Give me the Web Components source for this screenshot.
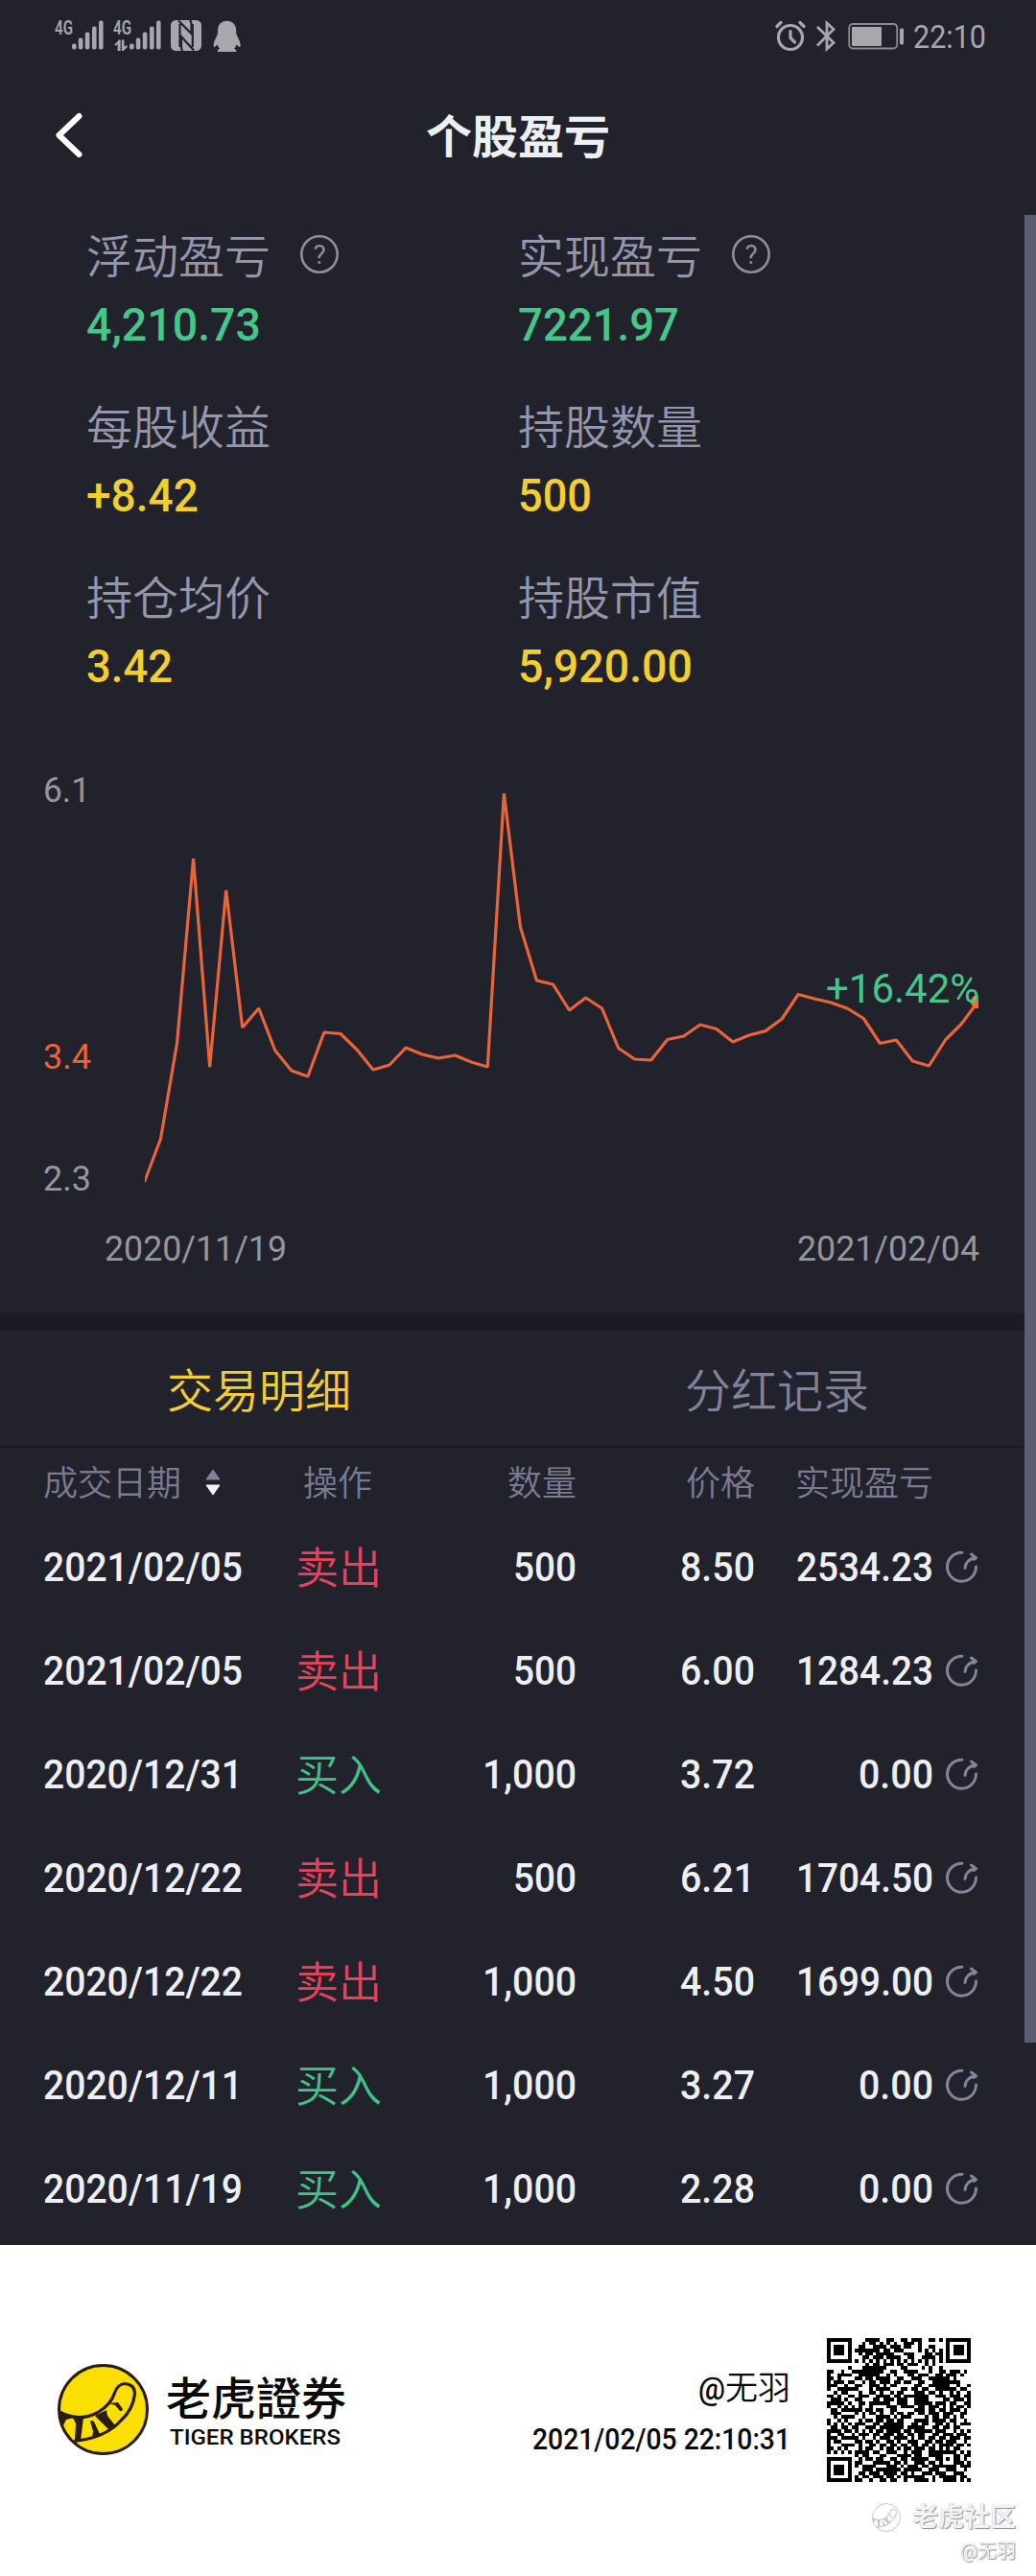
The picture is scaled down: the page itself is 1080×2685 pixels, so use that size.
<!DOCTYPE html>
<html lang="zh-CN">
<head>
<meta charset="utf-8">
<title>个股盈亏</title>
<style>
html,body{margin:0;padding:0;background:#fff}
body{width:1080px;font-family:Roboto,"Noto Sans CJK SC",sans-serif}
</style>
</head>
<body>
<pnl-page></pnl-page>
<script>
function define(name, html, init){
  customElements.define(name, class extends HTMLElement{
    constructor(){
      super();
      this.attachShadow({mode:'open'});
    }
    connectedCallback(){
      this.shadowRoot.innerHTML = typeof html === 'function' ? html(this) : html;
      if(init) init(this);
    }
  });
}

/* Text squeezed or stretched to a given advance width */
define('fit-text', e=>`<style>
:host{display:block;width:${e.getAttribute('w')}px;flex:none;white-space:nowrap}
span{display:inline-block;transform-origin:0 50%}
</style><span><slot></slot></span>`, e=>{
  const s=e.shadowRoot.querySelector('span');
  const n=s.getBoundingClientRect().width;
  if(n) s.style.transform=`scaleX(${(+e.getAttribute('w')/n).toFixed(4)})`;
});

const bars = [[0,24.5,6],[6.8,18.5,12],[13.8,12.5,18],[21,6.5,24],[28,0.5,30]]
  .map(([x,y,h])=>`<rect x="${x}" y="${y}" width="4.6" height="${h}" rx="2"/>`).join('');

define('status-bar', `<style>
:host{display:flex;height:75px;padding:0 52px 0 57px;box-sizing:border-box;justify-content:space-between;color:#a7a7ad}
svg{display:block;fill:#a7a7ad;flex:none}
.side{display:flex;align-items:flex-start;padding-top:21px;height:33px}
.net{font-size:20.500px;line-height:17px;font-weight:600;display:flex;flex-direction:column}
.time{font-size:34px;line-height:34px}
</style>
<div class="side">
  <div class="net"><fit-text w="19">4G</fit-text></div>
  <svg width="33" height="32" style="margin-left:-1px">${bars}</svg>
  <div class="net" style="margin-left:10px"><fit-text w="19">4G</fit-text>
    <svg width="17" height="15"><path d="M1 9 6 3.500h1.600V15H4.600V8.200L3 9.600zM8.800 3.500h2.600v7L14.600 9v2.200l-4 3.800H8.800z"/></svg></div>
  <svg width="33" height="32" style="margin-left:-2px">${bars}</svg>
  <svg width="32" height="32" style="margin-left:10px"><rect width="32" height="32" rx="5.500"/><path d="M8 .5 21.500 14V5Q21.500 1.500 20 0M24 31.500 11 17v10.500Q11 31 12.500 32M9.500 4v24M22.800 4v24" fill="none" stroke="#21222b" stroke-width="2.200"/></svg>
  <svg width="30" height="34" style="margin-left:12px"><path d="M14.500.8C8.500.8 5 5 5 11v3L1.500 22Q0 26 1 28q1.500 0 3.500-2.500Q5.500 28 7 29.500 4.500 30.500 4.500 33h20q0-2.500-2.500-3.500 2-2 2.800-4 2 2.500 3.500 2.500 1-2-.5-6L24.200 14v-3C24.200 5 20.500.8 14.500.8z"/></svg>
</div>
<div class="side">
  <svg width="32" height="33" viewBox="0 0 32 33" style="fill:none;stroke:#a7a7ad;stroke-width:3.200;stroke-linecap:round"><circle cx="16" cy="18" r="12.500"/><path d="M16 11.500v7l4.500 4.500M2 6.500 6 2.500M30 6.500 26 2.500"/></svg>
  <svg width="22" height="33" style="margin-left:10px;fill:none;stroke:#a7a7ad;stroke-width:2.800"><path d="M2 7 19 23.500 12 30V3l7 6.500L2 26.500"/></svg>
  <svg width="60" height="33" style="margin-left:12px"><rect x="1.200" y="4" width="50" height="25.500" rx="4" fill="none" stroke="#8b8b92" stroke-width="1.800"/><rect x="4" y="7" width="31" height="20" rx="1"/><rect x="54" y="8.500" width="4" height="17" rx="1.500"/></svg>
  <fit-text class="time" w="76" style="margin-left:8px">22:10</fit-text>
</div>`);

define('nav-bar', `<style>
:host{display:grid;grid-template-columns:200px 1fr 200px;height:132px;align-items:center;color:#eeeff3}
svg{display:block;margin-left:56px}
.t{font-size:48px;font-weight:700;line-height:60px;text-align:center;padding-top:6px}
</style>
<svg width="34" height="52" fill="none" stroke="#fff" stroke-width="6" stroke-linecap="round" stroke-linejoin="round"><path d="M26.500 6 5.500 26 26.500 46"/></svg>
<div class="t"><slot></slot></div>`);

define('metric-item', e=>`<style>
:host{display:flex;flex-direction:column;height:178px}
.l{display:flex;align-items:center;height:60px;color:#9496ab;font-size:48px;line-height:60px;font-weight:350}
.l b{font-weight:350;padding-top:5px}
svg{display:block;margin:-3px 0 0 29px}
.v{font-size:48.500px;line-height:50px;font-weight:500;margin-top:17px;color:${e.getAttribute('tone')==='up'?'#45c78a':'#f2ce2f'}}
.q{font-size:28px;text-anchor:middle;fill:#8e8e9a;font-weight:400}
</style>
<div class="l"><b>${e.getAttribute('label')}</b>${e.hasAttribute('help')?`<svg width="44" height="44"><circle cx="22" cy="22" r="18.700" fill="none" stroke="#8e8e9a" stroke-width="2.600"/><text class="q" x="22" y="32">?</text></svg>`:''}</div>
<fit-text class="v" w="${e.getAttribute('w')}"><slot></slot></fit-text>`);

define('metric-grid', `<style>
:host{display:grid;grid-template-columns:450px 1fr;padding:30px 0 0 90px;height:553px;box-sizing:border-box}
</style><slot></slot>`);

const ys=[1232,1187,1087,895,1112,928,1071,1051,1095,1116,1122,1076,1077.5,1094,1115,1110,1092,1099,1103,1100,1107,1112,827,966,1022,1026,1053,1040,1051,1092.5,1104,1105,1083.5,1080,1068,1072.5,1086,1079,1074.6,1062,1036.5,1041,1045,1051,1061.5,1087.5,1084,1106,1111,1084,1067,1044];
const pts=ys.map((y,i)=>`${(17.04*i-.5).toFixed(1)},${y-760}`).join(' ');
define('pnl-chart', `<style>
:host{display:flex;flex-direction:column;height:610px;color:#96969f;font-size:36px}
.plot{display:flex;height:500px;padding-left:45px;position:relative}
.axis{display:flex;flex-direction:column;width:106px;line-height:40px;padding-top:44.500px;box-sizing:border-box}
.axis :nth-child(2){margin-top:238px;color:#ec6337}
.axis :nth-child(3){margin-top:87px}
svg{display:block}
.tip{position:absolute;left:860.500px;top:246px;font-size:42px;line-height:50px;color:#45c78a}
.dates{display:flex;justify-content:space-between;padding:22.500px 59px 0 109px;line-height:40px}
</style>
<div class="plot">
  <div class="axis"><fit-text w="49">6.1</fit-text><fit-text w="50">3.4</fit-text><fit-text w="50">2.3</fit-text></div>
  <svg width="869" height="500"><polyline points="${pts}" fill="none" stroke="#e96539" stroke-width="3.200" stroke-linejoin="bevel"/><circle cx="868" cy="284" r="7" fill="#ff6a2e"/></svg>
  <div class="tip"><fit-text w="160">+16.42%</fit-text></div>
</div>
<div class="dates"><fit-text w="190">2020/11/19</fit-text><fit-text w="190">2021/02/04</fit-text></div>`);

define('tab-bar', `<style>
:host{display:grid;grid-template-columns:1fr 1fr;height:140px;border-top:18px solid #1b1b24;border-bottom:2px solid #181820;box-sizing:border-box;font-size:48px;line-height:60px;font-weight:350;text-align:center;align-items:center;color:#80819a}
div{padding-top:7px}
.on{color:#f2ce2f}
</style><div class="on">交易明细</div><div>分红记录</div>`);

const cols='display:grid;grid-template-columns:263px 88px 205px 186px 186px 46px;padding-left:45px;align-items:center;';
define('trade-head', `<style>
:host{${cols}height:69px;font-size:36px;line-height:44px;font-weight:350;color:#7a7b92}
.r{text-align:right}.c{text-align:center}.d{display:flex;align-items:center;gap:24px}
div{padding-top:7px}
svg{display:block;margin-top:-5px}
</style>
<div class="d">成交日期<svg width="18" height="30"><path d="M9 2 16 12H2z" fill="#80819a" stroke="#80819a" stroke-linejoin="round"/><path d="M9 28 16 18H2z" fill="#f4f4f6" stroke="#f4f4f6" stroke-linejoin="round"/></svg></div>
<div class="c">操作</div><div class="r">数量</div><div class="r">价格</div><div class="r">实现盈亏</div>`);

define('trade-row', e=>{
  const [d,a,q,p,g]=e.getAttribute('data').split('|');
  const w={'500':66,'1,000':98};
  const gw=g.length>4?143:78;
  return `<style>
:host{${cols}height:108px;font-size:43px;line-height:54px;font-weight:500;color:#eeeff3}
.r{justify-self:end}
.a{text-align:center;white-space:nowrap;font-weight:350;font-size:45px;padding-top:5px;color:${a==='卖出'?'#e6425c':'#40c387'}}
svg{display:block;justify-self:end}
</style>
<fit-text w="208">${d}</fit-text><div class="a">${a}</div>
<fit-text class="r" w="${w[q]}">${q}</fit-text><fit-text class="r" w="78">${p}</fit-text><fit-text class="r" w="${gw}">${g}</fit-text>
<svg width="34" height="36" fill="none" stroke="#84859c" stroke-width="3" stroke-linecap="round"><path d="M18 3.200A15 15 0 1 0 32.500 18"/><path d="M21 19.500Q21.500 11 31.500 8.500M27.500 5 32.500 8.800 30 10.500" stroke-linejoin="round"/></svg>`;
});

define('tiger-logo', `<style>:host{display:block;flex:none}svg{display:block;width:100%;height:100%}</style>
<svg viewBox="0 0 95 95"><circle cx="47.500" cy="47.500" r="46" fill="var(--disc,#fbdf00)" stroke="var(--ink,#291d13)" stroke-width="3"/>
<g fill="none" stroke="var(--ink,#291d13)" stroke-width="3.200"><path d="M2 50Q23 61 42 50.500 56 42 59.500 30 63 20.500 70.500 20.500 80.500 21.500 80.500 31 79 47 66 59 50 77 17 80.500"/></g>
<g fill="var(--ink,#291d13)"><path d="M1 49 17 56 9 58 5 66z"/><path d="M16 56h11l-3 24h-6L19 62z"/><path d="M34 60q2-2 4 0l6 13-8 4 1-7z"/><path d="M39 54 51 48 52 54 60 64 53 68z"/><path d="M53 41 63 40 68 47q-1 3-3 2l-5-6z"/></g></svg>`);

/* QR code, 41 modules a side */
const qr=[
'0001111001100110111001101','0010110101010011101000000','0110011110111011001001100','1111111011011100001010101',
'0101101111100011100011011','0011011101111001100111101','1010101010101010101010101','0001011011101101110010100',
'0011111110000110000101001',
'11001001111111110011001111000100110111010','10011110011111100101000110111001101110100',
'11010010110110111100110011100111111010000','10111001001011011101101100110011111111000',
'11100110110011101011000001100111111001001','10011101100010111100011011011001111110110',
'00101110010011010010110001110110100101001','11010011011100111101101111111001110111011',
'01110110110001101110111001111000011011101','11111010011011111100111001111101110110011',
'10010111010010000111011110110111010101101','01101101110110110011000001110110110111010',
'01110010101011010010110110110111011100110','00101111001000111101011100001011011010100',
'10010110010110110110110001111011110110010','10101010111001101111110011011001101010111',
'01101101100111011111110111110011011011000','11110110101010110111101101111101110010101',
'10011011011101101110110110110011011101110','11101101101001011101111010110110110111011',
'10110010110110100110100111001101101110010','10001101010011011011011011011010111101101',
'11010110010110010110101101110110101011000','10101010111101100111001011100111111010101',
'101100011000111101100111111111011','010110110011011011111001101011010','110001111101101001110110111111101',
'101111000111010111011011011000111','001110111111101111100111001110010','011011101111011010011101110011100',
'101101110110101111110010111110110','110010011011001001111010011110101'];
define('qr-code', `<style>:host{display:block;flex:none;width:150px;height:150px}svg{display:block}</style><svg width="150" height="150" viewBox="0 0 41 41" shape-rendering="crispEdges"></svg>`, e=>{
  const g=[];
  for(let r=0;r<41;r++){g.push([]);for(let c=0;c<41;c++){
    const off=(r<9||r>32)?8:0; g[r][c]=(qr[r][c-off]==='1')?1:0;
  }}
  const ring=(r0,c0,n)=>{for(let r=0;r<n;r++)for(let c=0;c<n;c++){const d=Math.min(r,c,n-1-r,n-1-c);g[r0+r][c0+c]=d===1?0:1}};
  for(let i=0;i<8;i++)for(let j=0;j<8;j++){g[i][j]=0;g[i][40-j]=0;g[40-i][j]=0}
  ring(0,0,7);ring(0,34,7);ring(34,0,7);ring(32,32,5);
  for(let i=8;i<33;i++){g[6][i]=g[i][6]=i%2?0:1}
  let d='';
  g.forEach((row,r)=>row.forEach((v,c)=>{if(v)d+=`M${c} ${r}h1v1h-1z`}));
  e.shadowRoot.querySelector('svg').innerHTML=`<path d="${d}"/>`;
});

define('share-footer', `<style>
:host{display:flex;flex-direction:column;height:345px;background:#fff;color:#0a0a0a}
.main{display:flex;height:251px;padding:0 68px 0 60px;align-items:flex-start}
tiger-logo.big{width:95px;height:95px;margin-top:124px}
.brand{margin:131px 0 0 18px;font-family:Roboto,"Noto Sans CJK TC",sans-serif}
.cn{font-size:47px;line-height:60px;font-weight:500}
.en{font-size:22px;line-height:26px;font-weight:500;margin:-3px 0 0 4px}
.who{margin:127px 38px 0 auto;display:flex;flex-direction:column;align-items:flex-end}
.name{display:flex;font-size:34px;line-height:44px;font-weight:350}
.at{font-weight:500;font-size:34px}
.when{font-size:30.500px;line-height:34px;font-weight:500;margin-top:15px}
qr-code{margin-top:97px}
.mark{display:flex;flex-direction:column;align-items:flex-end;padding-right:21px;color:#f2f2f4;text-shadow:1px 1px 1px #8e8e98,0 0 1px #b8b8c0}
.l{display:flex;align-items:center;gap:12px;font-size:27px;line-height:36px;font-weight:700;padding-top:15px}
.l tiger-logo{width:30px;height:30px;--disc:#fff;--ink:#c4c4cc}
.u{font-size:20px;line-height:24px;font-weight:400;margin-top:5px}
</style>
<div class="main">
  <tiger-logo class="big"></tiger-logo>
  <div class="brand"><fit-text class="cn" w="188">老虎證券</fit-text><fit-text class="en" w="178">TIGER BROKERS</fit-text></div>
  <div class="who"><div class="name"><fit-text class="at" w="28">@</fit-text><span>无羽</span></div><fit-text class="when" w="269">2021/02/05 22:10:31</fit-text></div>
  <qr-code></qr-code>
</div>
<div class="mark"><div class="l"><tiger-logo></tiger-logo><span>老虎社区</span></div><div class="u">@无羽</div></div>`);

define('pnl-page', `<style>
:host{display:flex;flex-direction:column;width:1080px;height:2685px;position:relative;overflow:hidden;background:#21222b}
.bar{position:absolute;right:0;top:224px;width:12px;height:1905px;background:#5c5d70}
.list{height:763px;padding-top:1px;box-sizing:border-box}
</style>
<status-bar></status-bar>
<nav-bar>个股盈亏</nav-bar>
<metric-grid>
<metric-item label="浮动盈亏" help tone="up" w="182">4,210.73</metric-item>
<metric-item label="实现盈亏" help tone="up" w="168">7221.97</metric-item>
<metric-item label="每股收益" w="117">+8.42</metric-item>
<metric-item label="持股数量" w="77">500</metric-item>
<metric-item label="持仓均价" w="90">3.42</metric-item>
<metric-item label="持股市值" w="182">5,920.00</metric-item>
</metric-grid>
<pnl-chart></pnl-chart>
<tab-bar></tab-bar>
<trade-head></trade-head>
<div class="list">
<trade-row data="2021/02/05|卖出|500|8.50|2534.23"></trade-row>
<trade-row data="2021/02/05|卖出|500|6.00|1284.23"></trade-row>
<trade-row data="2020/12/31|买入|1,000|3.72|0.00"></trade-row>
<trade-row data="2020/12/22|卖出|500|6.21|1704.50"></trade-row>
<trade-row data="2020/12/22|卖出|1,000|4.50|1699.00"></trade-row>
<trade-row data="2020/12/11|买入|1,000|3.27|0.00"></trade-row>
<trade-row data="2020/11/19|买入|1,000|2.28|0.00"></trade-row>
</div>
<share-footer></share-footer>
<div class="bar"></div>`);
</script>
</body>
</html>
